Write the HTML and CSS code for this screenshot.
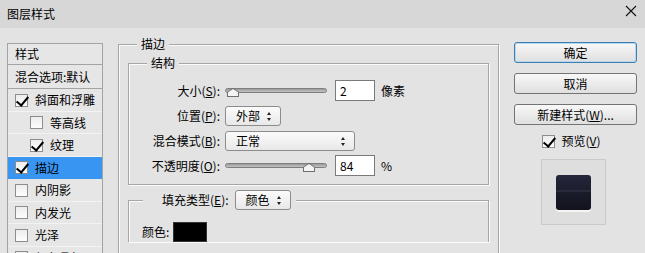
FILE: index.html
```html
<!DOCTYPE html>
<html>
  <head>
    <title>图层样式</title>
    <link rel="stylesheet" href="styles.css">
  </head>
  <body>
    <div class="dialog">
      <div class="titlebar">
        <span>图层样式</span>
        <svg class="close" width="12" height="12" viewBox="0 0 12 12"><path d="M1 1 L11 11 M11 1 L1 11" stroke="#111" stroke-width="1.1" fill="none"/></svg>
      </div>
      <div class="main">
        <div class="styles">
          <div class="head">样式</div>
          <div class="head">混合选项:默认</div>
          <div class="item"><span class="cb on"></span>斜面和浮雕</div>
          <div class="item sub"><span class="cb"></span>等高线</div>
          <div class="item sub"><span class="cb on"></span>纹理</div>
          <div class="item sel"><span class="cb on"></span>描边</div>
          <div class="item"><span class="cb"></span>内阴影</div>
          <div class="item"><span class="cb"></span>内发光</div>
          <div class="item"><span class="cb"></span>光泽</div>
          <div class="item"><span class="cb on"></span>颜色叠加</div>
        </div>

        <fieldset class="group outer">
          <legend>描边</legend>
          <fieldset class="group struct">
            <legend>结构</legend>
            <div class="row">
              <label>大小(<u>S</u>):</label>
              <div class="slider"><span class="thumb" style="left: 1px"></span></div>
              <div class="num">2</div>
              <span class="unit">像素</span>
            </div>
            <div class="row">
              <label>位置(<u>P</u>):</label>
              <div class="select short">外部<span class="arrows"></span></div>
            </div>
            <div class="row">
              <label>混合模式(<u>B</u>):</label>
              <div class="select long">正常<span class="arrows"></span></div>
            </div>
            <div class="row">
              <label>不透明度(<u>O</u>):</label>
              <div class="slider"><span class="thumb" style="left: 77px"></span></div>
              <div class="num">84</div>
              <span class="unit">%</span>
            </div>
          </fieldset>
          <fieldset class="group fill">
            <legend><span>填充类型(<u>E</u>):</span><div class="select short">颜色<span class="arrows"></span></div></legend>
            <div class="color"><span>颜色:</span><span class="swatch"></span></div>
          </fieldset>
        </fieldset>

        <div class="side">
          <button class="btn default">确定</button>
          <button class="btn">取消</button>
          <button class="btn">新建样式(<u>W</u>)...</button>
          <div class="preview"><span class="cb on"></span><span>预览(<u>V</u>)</span></div>
          <div class="thumbbox"><div class="tile"></div></div>
        </div>
      </div>
    </div>
  </body>
</html>
```

FILE: styles.css
```css
body { margin: 0; font-family: "Noto Sans CJK SC", "Liberation Sans", sans-serif; font-size: 12px; line-height: 16px; color: #000; }
u { text-decoration: underline; text-underline-offset: 1px; }

.dialog { width: 645px; height: 253px; overflow: hidden; background: #e3e3e3; }
.titlebar { height: 28px; background: #d7d7d7; display: flex; align-items: center; justify-content: space-between; padding: 0 8px 0 7px; box-sizing: border-box; }
.titlebar span { margin-top: -1px; }
.close { margin-top: -6px; }

.main { display: flex; align-items: flex-start; }

/* style list */
.styles { margin: 15px 0 0 7px; width: 96px; border: 1px solid #a3a3a3; border-bottom: none; box-sizing: border-box; background: #e6e6e6; }
.head { height: 20px; border-bottom: 1px solid #a3a3a3; padding-left: 7px; display: flex; align-items: center; }
.head + .head { height: 23px; }
.item { height: 22px; border-bottom: 1px solid #f3f3f3; display: flex; align-items: center; padding-left: 7px; gap: 7px; }
.item:nth-child(even) { height: 21px; }
.item.sub { padding-left: 22px; }
.item.sel { background: #3895f2; border-bottom-color: #3895f2; }

.cb { width: 13px; height: 13px; box-sizing: border-box; border: 1px solid #8d8d8d; background: linear-gradient(#ededed, #fdfdfd); flex: none; position: relative; }
.cb.on::after { content: ""; position: absolute; left: 3px; top: -1px; width: 5px; height: 10px; border: solid #000; border-width: 0 2px 2px 0; transform: rotate(40deg); }

/* middle panel */
.group { margin: 0; min-width: 0; border: 1px solid #a6a6a6; box-shadow: inset 1px 1px 0 #fbfbfb, 1px 1px 0 #fbfbfb; }
.group legend { padding: 0 4px; background: #e3e3e3; line-height: 16px; }
.outer { margin: 8px 0 0 15px; width: 381px; height: 240px; padding: 3px 9px 0; box-sizing: border-box; border-bottom: none; }
.outer > legend { margin-left: 9px; }
.struct { padding: 7px 0 6px; }
.struct > legend { margin-left: 18px; }
.row { height: 25px; display: flex; align-items: center; }
.row label { width: 91px; text-align: right; margin-right: 5px; }

.slider { width: 102px; height: 5px; box-sizing: border-box; border: 1px solid #7d7d7d; border-radius: 3px; background: linear-gradient(#9a9a9a, #c4c4c4); position: relative; }
.thumb { position: absolute; top: -1px; width: 12px; height: 9px; }
.thumb::before { content: ""; position: absolute; inset: 0; background: #6f6f6f; clip-path: polygon(50% 0, 100% 45%, 100% 100%, 0 100%, 0 45%); }
.thumb::after { content: ""; position: absolute; inset: 1px; background: #f4f4f4; clip-path: polygon(50% 0, 100% 45%, 100% 100%, 0 100%, 0 45%); }

.num { margin-left: 8px; width: 40px; height: 21px; box-sizing: border-box; border: 1px solid #7a7a7a; background: #fff; padding-left: 4px; display: flex; align-items: center; }
.unit { margin-left: 6px; }

.select { height: 20px; box-sizing: border-box; border: 1px solid #8c8c8c; border-radius: 3px; background: linear-gradient(#fbfbfb, #e8e8e8); display: flex; align-items: center; padding-left: 10px; position: relative; }
.select.short { width: 56px; }
.select.long { width: 130px; }
.arrows { position: absolute; right: 8px; top: 5px; width: 5px; height: 9px; }
.arrows::before, .arrows::after { content: ""; position: absolute; left: 0; border-left: 2.5px solid transparent; border-right: 2.5px solid transparent; }
.arrows::before { top: 0; border-bottom: 3px solid #222; }
.arrows::after { bottom: 0; border-top: 3px solid #222; }

.fill { margin-top: 5px; padding: 12px 0 0 13px; border-bottom: none; }
.fill > legend { margin-left: 1px; padding: 0 5px 0 19px; display: flex; align-items: center; gap: 6px; }
.color { display: flex; align-items: center; gap: 4px; }
.swatch { width: 34px; height: 20px; box-sizing: border-box; border: 1px solid #333; background: #000; }

/* right column */
.side { margin: 14px 0 0 15px; width: 123px; display: flex; flex-direction: column; align-items: center; }
.btn { width: 123px; height: 21px; margin-bottom: 10px; padding: 0; font: inherit; border: 1px solid #747474; border-radius: 3px; background: linear-gradient(#f8f8f8, #dfdfdf); color: #000; }
.btn.default { border-color: #3c7fb1; box-shadow: inset 0 0 0 1px #b8d6ee; }
.preview { margin-top: -2px; display: flex; align-items: center; gap: 6px; margin-left: -8px; }
.thumbbox { margin-top: 10px; margin-left: -5px; width: 65px; height: 66px; box-sizing: border-box; border: 1px solid #cacaca; background: #dedede; display: flex; align-items: center; justify-content: center; }
.tile { width: 35px; height: 35px; border-radius: 3px; background: linear-gradient(#24263a 0, #1c1e2e 44%, #4a4d60 45%, #1a1c2b 48%, #12131d 100%); box-shadow: 0 2px 0 #f5f5f5; }
```
